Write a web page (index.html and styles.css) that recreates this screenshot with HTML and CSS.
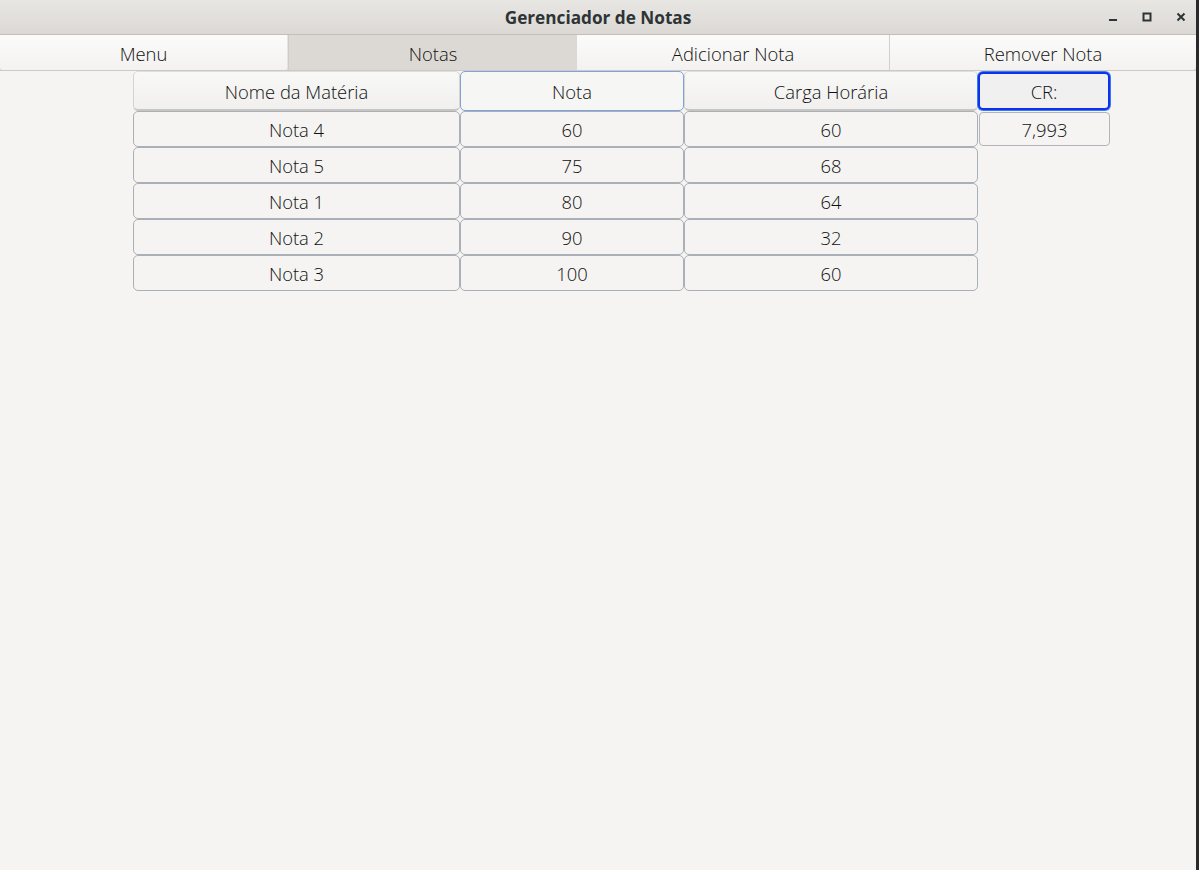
FILE: index.html
```html
<!DOCTYPE html>
<html lang="pt">
<head>
<meta charset="utf-8">
<title>Gerenciador de Notas</title>
<link rel="stylesheet" href="styles.css">
</head>
<body>
<div class="window">
  <header class="titlebar">
    <div class="title">Gerenciador de Notas</div>
    <div class="controls">
      <svg class="ctl" width="10" height="10" viewBox="0 0 10 10"><rect x="1" y="7" width="8" height="2" fill="#2e3436"/></svg>
      <svg class="ctl" width="10" height="10" viewBox="0 0 10 10"><rect x="1.5" y="1.5" width="7" height="7" fill="none" stroke="#2e3436" stroke-width="2"/></svg>
      <svg class="ctl" width="10" height="10" viewBox="0 0 10 10"><path d="M1.5 1.5 L8.5 8.5 M8.5 1.5 L1.5 8.5" stroke="#2e3436" stroke-width="2"/></svg>
    </div>
  </header>
  <nav class="tabs">
    <div class="tab tab-menu">Menu</div>
    <div class="tab tab-notas active">Notas</div>
    <div class="tab tab-add">Adicionar Nota</div>
    <div class="tab tab-rem">Remover Nota</div>
  </nav>
  <main class="content">
    <div class="grid">
      <div class="cell head">Nome da Matéria</div>
      <div class="cell head focus-light">Nota</div>
      <div class="cell head">Carga Horária</div>
      <div class="cell head focus-strong">CR:</div>

      <div class="cell">Nota 4</div>
      <div class="cell">60</div>
      <div class="cell">60</div>
      <div class="cell cr">7,993</div>

      <div class="cell">Nota 5</div>
      <div class="cell">75</div>
      <div class="cell">68</div>
      <div class="empty"></div>

      <div class="cell">Nota 1</div>
      <div class="cell">80</div>
      <div class="cell">64</div>
      <div class="empty"></div>

      <div class="cell">Nota 2</div>
      <div class="cell">90</div>
      <div class="cell">32</div>
      <div class="empty"></div>

      <div class="cell">Nota 3</div>
      <div class="cell">100</div>
      <div class="cell">60</div>
      <div class="empty"></div>
    </div>
  </main>
</div>
</body>
</html>
```

FILE: styles.css
```css
* { box-sizing: border-box; }
html, body {
  margin: 0;
  padding: 0;
  width: 1199px;
  height: 870px;
  overflow: hidden;
  background: #f5f4f2;
}
body {
  font-family: "Open Sans", "Noto Sans", sans-serif;
  color: #111;
}
.window {
  width: 1199px;
  height: 870px;
  display: flex;
  flex-direction: column;
  background: #f5f4f2;
  border-right: 3px solid #2a2a2a;
}
.titlebar {
  height: 35px;
  flex: none;
  background: linear-gradient(#e8e6e3, #dcd9d5);
  border-bottom: 1px solid #c2beb9;
  display: flex;
  align-items: center;
  justify-content: center;
  position: relative;
}
.title {
  font-family: "Open Sans", "Noto Sans", sans-serif;
  font-weight: 700;
  font-size: 17.2px;
  color: #2e3436;
}
.controls {
  position: absolute;
  right: 10px;
  top: 12px;
  display: flex;
  gap: 24px;
}
.ctl { display: block; }
.tabs {
  height: 36px;
  flex: none;
  display: flex;
  background: #dcd9d5;
  border-bottom: 1px solid #cdcac5;
}
.tab {
  display: flex;
  align-items: center;
  justify-content: center;
  font-size: 18.4px;
  font-weight: 300;
  color: #111;
  background: linear-gradient(#fbfbfa, #f3f2f1);
  padding-top: 1px;
}
.tab-menu { width: 288px; border-radius: 0 0 3px 3px; border-right: 1px solid #e6e4e1; }
.tab-notas { width: 289px; background: #dcd9d5; border-left: 1px solid #cfccc7; }
.tab-add { width: 313px; border-right: 1px solid #d2cfcb; }
.tab-rem { width: 306px; border-radius: 0 0 4px 0; }
.content {
  flex: 1;
  padding-left: 133px;
}
.grid {
  display: grid;
  grid-template-columns: 327px 224px 294px 133px;
  grid-template-rows: 40px repeat(5, 36px);
}
.cell {
  display: flex;
  align-items: center;
  justify-content: center;
  font-size: 18.4px;
  font-weight: 300;
  color: #111;
  background: #f5f4f2;
  border: 1px solid #aab0b8;
  border-radius: 5px;
  padding-top: 1px;
}
.head {
  background: linear-gradient(#f8f8f7, #f1f0ef);
  border: 1px solid #d6d4d1;
  border-bottom: 2px solid #c7c5c2;
  border-top-color: #e0dedb;
}
.focus-light {
  border: 1px solid #7fa3da;
  background: #f6f6f5;
}
.focus-strong {
  border: 2px solid #0a32f0;
  box-shadow: 0 0 0 1px #3d7bea;
  background: #f0f0f0;
  margin: 1px 1px 1px 0;
}
.cr {
  margin: 1px 1px 1px 1px;
  border-color: #b2b6bc;
  border-radius: 4px;
}
.empty { }
```
